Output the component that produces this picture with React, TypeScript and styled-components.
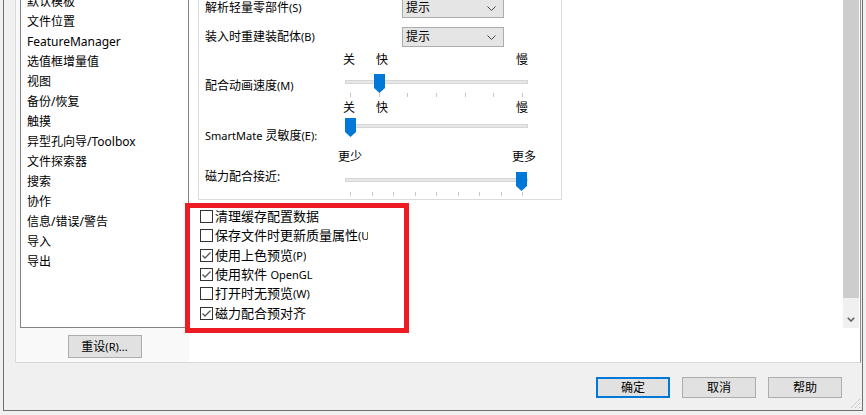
import React from "react";
import styled, { createGlobalStyle } from "styled-components";

const UI_FONT = `"Noto Sans", "Noto Sans CJK SC", sans-serif`;

const GlobalStyle = createGlobalStyle`
  html, body { margin: 0; padding: 0; background: #f0f0f0; }
  body { font-family: ${UI_FONT}; font-size: 12px; color: #000; }
  * { box-sizing: border-box; }
`;

const Screen = styled.div`
  position: relative;
  width: 866px;
  height: 415px;
  overflow: hidden;
  padding-left: 3px;
  background: #f0f0f0;
`;

const Window = styled.div`
  position: relative;
  width: 860px;
  height: 411px;
  border: 1px solid #6f6f6f;
  border-top: none;
  background: #f0f0f0;
  display: flex;
  flex-direction: column;
`;

const TabPage = styled.div`
  margin-left: 11px;
  width: 846px;
  height: 363px;
  flex: none;
  border: 1px solid #d9d9d9;
  border-top: none;
  border-right-color: #8f8f8f;
  background: #f9f9f9;
  display: flex;
`;

const LeftCol = styled.div`
  width: 173px;
  padding-left: 4px;
  display: flex;
  flex-direction: column;
  align-items: flex-start;
`;

const ListColumn = styled.div`
  width: 169px;
  display: flex;
  flex-direction: column;
  align-items: center;
`;

const ListBox = styled.div`
  width: 169px;
  height: 328px;
  border: 1px solid #828282;
  border-top: none;
  background: #fff;
  overflow: hidden;
`;

const ListInner = styled.ul`
  margin: -8px 0 0;
  padding: 0;
  list-style: none;
`;

const ListItem = styled.li`
  height: 20px;
  line-height: 20px;
  padding-left: 6px;
  white-space: nowrap;
`;

const PushButton = styled.button<{ $primary?: boolean; $w: number; $h: number }>`
  width: ${(p) => p.$w}px;
  height: ${(p) => p.$h}px;
  padding: 0;
  font-family: ${UI_FONT};
  font-size: 12px;
  line-height: 16px;
  color: #000;
  background: #e1e1e1;
  border: ${(p) => (p.$primary ? "2px solid #0078d7" : "1px solid #adadad")};
  display: flex;
  align-items: center;
  justify-content: center;
`;

const ResetWrap = styled.div`
  margin-top: 7px;
  padding: 0;
`;

const Acc = styled.span`
  font-size: 11px;
`;

const Latin = styled.span`
  font-size: 11px;
`;

const RightPane = styled.div`
  width: 671px;
  height: 362px;
  background: #fff;
  display: flex;
`;

const PaneContent = styled.div`
  flex: 1;
  display: flex;
  flex-direction: column;
`;

const SettingsBox = styled.div`
  margin-left: 9px;
  width: 364px;
  height: 200px;
  border: 1px solid #dcdcdc;
  border-top: none;
  padding-left: 6px;
  display: flex;
  flex-direction: column;
`;

const DropRow = styled.div<{ $mt: number }>`
  margin-top: ${(p) => p.$mt}px;
  height: 20px;
  display: flex;
  align-items: center;
`;

const DropLabel = styled.div`
  width: 197px;
  line-height: 16px;
  white-space: nowrap;
`;

const Select = styled.div`
  width: 102px;
  height: 20px;
  background: #e5e5e5;
  border: 1px solid #acacac;
  display: flex;
  align-items: center;
  justify-content: space-between;
  padding: 0 7px 0 3px;
  line-height: 16px;
`;

const SliderRow = styled.div<{ $h: number; $mt?: number }>`
  height: ${(p) => p.$h}px;
  margin-top: ${(p) => p.$mt ?? 0}px;
  display: flex;
`;

const RowLabel = styled.div<{ $top: number }>`
  width: 140px;
  padding-top: ${(p) => p.$top}px;
  line-height: 16px;
  white-space: nowrap;
`;

const SliderBox = styled.div`
  width: 183px;
  display: flex;
  flex-direction: column;
`;

const ScaleRow = styled.div<{ $h: number }>`
  position: relative;
  height: ${(p) => p.$h}px;
`;

const ScaleLabel = styled.span`
  position: absolute;
  top: 2px;
  line-height: 16px;
  transform: translateX(-50%);
  white-space: nowrap;
`;

const TrackArea = styled.div`
  position: relative;
  height: 19px;
  padding-top: 6px;
`;

const Track = styled.div`
  height: 4px;
  background: #e7e7e7;
  border: 1px solid #d6d6d6;
`;

const ThumbSvg = styled.svg`
  position: absolute;
  top: 0;
  display: block;
`;

const TickRow = styled.div<{ $mt: number }>`
  margin-top: ${(p) => p.$mt}px;
  height: 4px;
  padding: 0 5px;
  display: flex;
  justify-content: space-between;
`;

const Tick = styled.span`
  width: 1px;
  height: 4px;
  background: #c6c6c6;
`;

const CheckList = styled.div`
  padding: 7px 0 0 11px;
  display: flex;
  flex-direction: column;
`;

const CheckRow = styled.div`
  height: 19.3px;
  display: flex;
  align-items: center;
`;

const Box = styled.span`
  width: 13px;
  height: 13px;
  border: 1px solid #333;
  background: #fff;
  display: flex;
  align-items: center;
  justify-content: center;
  flex: none;
`;

const CheckText = styled.span<{ $max?: number }>`
  margin-left: 2px;
  font-size: 13px;
  line-height: 17px;
  white-space: nowrap;
  overflow: hidden;
  max-width: ${(p) => (p.$max ? `${p.$max}px` : "none")};
`;

const Scrollbar = styled.div`
  width: 16px;
  margin-right: 1px;
  height: 328px;
  display: flex;
  flex-direction: column;
  background: #f0f0f0;
`;

const ScrollThumb = styled.div`
  height: 298px;
  background: #cdcdcd;
`;

const ScrollGap = styled.div`
  flex: 1;
`;

const ScrollArrow = styled.div`
  height: 17px;
  display: flex;
  align-items: center;
  justify-content: center;
`;

const Footer = styled.div`
  flex: 1;
  display: flex;
  justify-content: flex-end;
  align-items: flex-start;
  gap: 12px;
  padding: 14px 20px 0 0;
`;

const Grip = styled.svg`
  position: absolute;
  right: 1px;
  bottom: 1px;
`;

const Highlight = styled.div`
  position: absolute;
  left: 185px;
  top: 203px;
  width: 224px;
  height: 130px;
  border: 5px solid #ed1c24;
  pointer-events: none;
`;

const listItems: React.ReactNode[] = [
  "默认模板",
  "文件位置",
  "FeatureManager",
  "选值框增量值",
  "视图",
  "备份/恢复",
  "触摸",
  "异型孔向导/Toolbox",
  "文件探索器",
  "搜索",
  "协作",
  "信息/错误/警告",
  "导入",
  "导出",
];

const Chevron = () => (
  <svg width="9" height="5" viewBox="0 0 9 5">
    <polyline points="0.5,0.5 4.5,4.5 8.5,0.5" fill="none" stroke="#444" strokeWidth="1" />
  </svg>
);

const Thumb = ({ left }: { left: number }) => (
  <ThumbSvg width="11" height="19" viewBox="0 0 11 19" style={{ left }}>
    <path d="M0 0 H11 V14 L5.5 19 L0 14 Z" fill="#0078d7" />
  </ThumbSvg>
);

type Mark = { at: number; text: string };

const SPAN = 171;

const Slider = ({
  value,
  marks,
  scaleH,
  ticks,
  tickMt = 0,
}: {
  value: number;
  marks: Mark[];
  scaleH: number;
  ticks?: number;
  tickMt?: number;
}) => (
  <SliderBox>
    <ScaleRow $h={scaleH}>
      {marks.map((m) => (
        <ScaleLabel key={m.text} style={{ left: m.at }}>
          {m.text}
        </ScaleLabel>
      ))}
    </ScaleRow>
    <TrackArea>
      <Track />
      <Thumb left={Math.round(value * SPAN)} />
    </TrackArea>
    {ticks ? (
      <TickRow $mt={tickMt}>
        {Array.from({ length: ticks }).map((_, i) => (
          <Tick key={i} />
        ))}
      </TickRow>
    ) : null}
  </SliderBox>
);

const speedMarks: Mark[] = [
  { at: 4, text: "关" },
  { at: 37, text: "快" },
  { at: 177, text: "慢" },
];

const CheckItem = ({
  checked,
  children,
  max,
}: {
  checked: boolean;
  children: React.ReactNode;
  max?: number;
}) => (
  <CheckRow>
    <Box>
      {checked ? (
        <svg width="11" height="11" viewBox="0 0 11 11">
          <polyline points="1.5,5.5 4,8 9.5,2.5" fill="none" stroke="#555" strokeWidth="1.3" />
        </svg>
      ) : null}
    </Box>
    <CheckText $max={max}>{children}</CheckText>
  </CheckRow>
);

export default function App() {
  return (
    <>
      <GlobalStyle />
      <Screen>
        <Window>
          <TabPage>
            <LeftCol>
              <ListColumn>
                <ListBox>
                  <ListInner>
                    {listItems.map((t, i) => (
                      <ListItem key={i}>{t}</ListItem>
                    ))}
                  </ListInner>
                </ListBox>
                <ResetWrap>
                  <PushButton $w={74} $h={23}>
                    重设<Acc>(R)...</Acc>
                  </PushButton>
                </ResetWrap>
              </ListColumn>
            </LeftCol>
            <RightPane>
              <PaneContent>
                <SettingsBox>
                  <DropRow $mt={-2}>
                    <DropLabel>
                      解析轻量零部件<Acc>(S)</Acc>
                    </DropLabel>
                    <Select>
                      <span>提示</span>
                      <Chevron />
                    </Select>
                  </DropRow>
                  <DropRow $mt={9}>
                    <DropLabel>
                      装入时重建装配体<Acc>(B)</Acc>
                    </DropLabel>
                    <Select>
                      <span>提示</span>
                      <Chevron />
                    </Select>
                  </DropRow>
                  <SliderRow $h={48} $mt={3}>
                    <RowLabel $top={28}>
                      配合动画速度<Acc>(M)</Acc>
                    </RowLabel>
                    <Slider value={1 / 6} marks={speedMarks} scaleH={24} ticks={7} />
                  </SliderRow>
                  <SliderRow $h={49}>
                    <RowLabel $top={30}>
                      <Latin>SmartMate</Latin> 灵敏度<Acc>(E):</Acc>
                    </RowLabel>
                    <Slider value={0} marks={speedMarks} scaleH={20} />
                  </SliderRow>
                  <SliderRow $h={51}>
                    <RowLabel $top={22}>磁力配合接近:</RowLabel>
                    <Slider
                      value={1}
                      marks={[
                        { at: 5, text: "更少" },
                        { at: 179, text: "更多" },
                      ]}
                      scaleH={25}
                      ticks={9}
                      tickMt={1}
                    />
                  </SliderRow>
                </SettingsBox>
                <CheckList>
                  <CheckItem checked={false}>清理缓存配置数据</CheckItem>
                  <CheckItem checked={false} max={153}>
                    保存文件时更新质量属性<Acc>(U)</Acc>
                  </CheckItem>
                  <CheckItem checked>
                    使用上色预览<Acc>(P)</Acc>
                  </CheckItem>
                  <CheckItem checked>
                    使用软件 <Latin>OpenGL</Latin>
                  </CheckItem>
                  <CheckItem checked={false}>
                    打开时无预览<Acc>(W)</Acc>
                  </CheckItem>
                  <CheckItem checked>磁力配合预对齐</CheckItem>
                </CheckList>
              </PaneContent>
              <Scrollbar>
                <ScrollThumb />
                <ScrollGap />
                <ScrollArrow>
                  <svg width="8" height="5" viewBox="0 0 8 5">
                    <polyline points="0.8,0.8 4,4 7.2,0.8" fill="none" stroke="#606060" strokeWidth="1.6" />
                  </svg>
                </ScrollArrow>
              </Scrollbar>
            </RightPane>
          </TabPage>
          <Footer>
            <PushButton $primary $w={74} $h={21}>
              确定
            </PushButton>
            <PushButton $w={74} $h={21}>
              取消
            </PushButton>
            <PushButton $w={74} $h={21}>
              帮助
            </PushButton>
          </Footer>
          <Grip width="12" height="12" viewBox="0 0 12 12">
            <path d="M11 2 L2 11 M11 6 L6 11 M11 10 L10 11" stroke="#a8a8a8" strokeWidth="1" strokeDasharray="1 1" />
          </Grip>
        </Window>
        <Highlight />
      </Screen>
    </>
  );
}
